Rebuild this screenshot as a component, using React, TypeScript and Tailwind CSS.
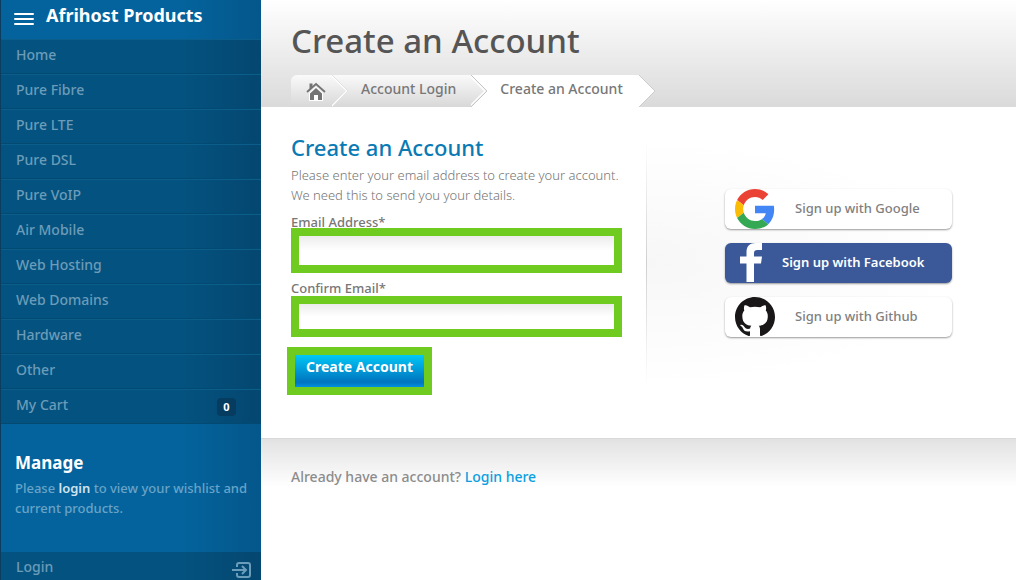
import type { ReactNode } from "react";

const products = [
  "Home",
  "Pure Fibre",
  "Pure LTE",
  "Pure DSL",
  "Pure VoIP",
  "Air Mobile",
  "Web Hosting",
  "Web Domains",
  "Hardware",
  "Other",
];

function NavRow({ children }: { children: ReactNode }) {
  return (
    <li className="h-[35px] border-t border-[#0b5d8a] shadow-[inset_0_-1px_0_#034a72]">
      {children}
    </li>
  );
}

function LoginIcon() {
  return (
    <svg width="20" height="16" viewBox="0 0 20 16" fill="none" stroke="currentColor" strokeWidth="2" aria-hidden="true">
      <path d="M5 5V3a2 2 0 0 1 2-2h9a2 2 0 0 1 2 2v10a2 2 0 0 1-2 2H7a2 2 0 0 1-2-2v-2" />
      <path d="M0 8h13M10 4l4 4-4 4" />
    </svg>
  );
}

function Sidebar() {
  return (
    <aside className="flex w-[261px] shrink-0 flex-col border-l border-[#0c3d5e] bg-linear-to-r from-[#04639c] from-70% to-[#04578b]">
      <header className="flex h-[39px] items-start gap-3 pl-[13px]">
        <button type="button" aria-label="Toggle menu" className="mt-[13px] flex w-5 flex-col gap-[3px]">
          <span className="h-0.5 rounded-full bg-white" />
          <span className="h-0.5 rounded-full bg-white" />
          <span className="h-0.5 rounded-full bg-white" />
        </button>
        <h2 className="pt-[3px] text-[18px] leading-6 font-bold text-white">Afrihost Products</h2>
      </header>

      <nav className="bg-linear-to-r from-[#04527f] from-70% to-[#044770] text-[14px] leading-[30px] font-medium text-[#6b9cb9]">
        <ul>
          {products.map((name) => (
            <NavRow key={name}>
              <a href="#" className="block px-[15px]">{name}</a>
            </NavRow>
          ))}
          <NavRow>
            <a href="#" className="flex items-start justify-between pr-[25px] pl-[15px]">
              My Cart
              <span className="mt-2 h-[18px] w-[19px] rounded-sm bg-[#053c60] text-center text-[11px] leading-[18px] font-bold text-white">
                0
              </span>
            </a>
          </NavRow>
        </ul>
      </nav>

      <section className="h-32 pt-[27px] pr-2 pl-[14px]">
        <h2 className="text-[17px] leading-6 font-bold text-white">Manage</h2>
        <p className="pt-[3px] text-[13px] leading-5 font-medium text-[#68a3c8]">
          Please <a href="#" className="font-semibold text-[#cfe3f0]">login</a> to view your wishlist and
          <br />
          current products.
        </p>
      </section>

      <a
        href="#"
        className="flex flex-1 items-start justify-between bg-linear-to-r from-[#04527f] from-70% to-[#044770] pr-[9px] pl-[15px] text-[14px] leading-[30px] font-medium text-[#6b9cb9]"
      >
        Login
        <span className="pt-[10px]"><LoginIcon /></span>
      </a>
    </aside>
  );
}

function Chevron() {
  return (
    <svg width="17" height="32" viewBox="0 0 17 32" fill="none" aria-hidden="true">
      <path d="M0 0L16 16L0 32" stroke="#c6c6c6" />
      <path d="M-1 0L15 16L-1 32" stroke="#fff" strokeWidth="1.4" />
    </svg>
  );
}

function Breadcrumbs() {
  return (
    <nav aria-label="Breadcrumb" className="text-[14px] leading-7 font-medium text-[#777]">
      <ol className="flex h-8">
        <li className="flex rounded-tl-md bg-linear-to-b from-[#fafafa] to-[#d8d8d8]">
          <a href="#" aria-label="Home" className="flex w-[41px] justify-end pt-[7px] pr-[6px]">
            <svg width="20" height="19" viewBox="0 0 20 19" aria-hidden="true">
              <path d="M3 11L10 5L17 11V19H3Z" fill="#fff" />
              <path d="M4 11.500L10 6L16 11.500V18H12V13H8V18H4Z" fill="#747474" />
              <path d="M1 10L10 2L19 10" fill="none" stroke="#747474" strokeWidth="1.800" />
              <path d="M3.500 1.500H6.500V4.500L3.500 7Z" fill="#747474" />
            </svg>
          </a>
          <Chevron />
        </li>
        <li className="flex bg-linear-to-b from-[#fafafa] to-[#d8d8d8]">
          <a href="#" className="pr-[15px] pl-3">Account Login</a>
        </li>
        <li className="flex">
          <svg width="17" height="32" viewBox="0 0 17 32" aria-hidden="true">
            <defs>
              <linearGradient id="crumb" x1="0" y1="0" x2="0" y2="1">
                <stop offset="0" stopColor="#fafafa" />
                <stop offset="1" stopColor="#d8d8d8" />
              </linearGradient>
            </defs>
            <rect width="17" height="32" fill="#fff" />
            <path d="M0 0L16 16L0 32Z" fill="url(#crumb)" />
            <path d="M0 0L16 16L0 32" fill="none" stroke="#c6c6c6" />
            <path d="M-2 0L14 16L-2 32" fill="none" stroke="#fff" strokeWidth="1.4" />
          </svg>
          <span aria-current="page" className="bg-white pr-4 pl-3">Create an Account</span>
          <svg width="17" height="32" viewBox="0 0 17 32" aria-hidden="true">
            <path d="M0 0L16 16L0 32Z" fill="#fff" />
            <path d="M0 0L16 16L0 32" fill="none" stroke="#ccc" />
          </svg>
        </li>
      </ol>
    </nav>
  );
}

function SignUpForm() {
  return (
    <form className="w-[355px] shrink-0 pt-[26px]">
      <h2 className="text-[22px] leading-7 font-medium text-[#0a7ab5]">Create an Account</h2>
      <p className="pt-1 text-[13px] leading-5 font-light text-[#757575]">
        Please enter your email address to create your account.
        <br />
        We need this to send you your details.
      </p>
      <div className="flex flex-col pt-[11px]">
        <label htmlFor="email" className="h-3 text-[13px] leading-3 font-medium text-[#777]">Email Address*</label>
        <input
          id="email"
          type="email"
          className="h-[45px] w-[331px] border-8 border-[#6fcb1f] bg-linear-to-b from-[#ececec] to-white to-50% px-2 text-sm outline-none"
        />
      </div>
      <div className="flex flex-col pt-[9px]">
        <label htmlFor="confirm" className="h-[14px] text-[13px] leading-3 font-medium text-[#777]">Confirm Email*</label>
        <input
          id="confirm"
          type="email"
          className="h-[41px] w-[331px] border-8 border-[#6fcb1f] bg-linear-to-b from-[#ececec] to-white to-50% px-2 text-sm outline-none"
        />
      </div>
      <button
        type="submit"
        className="mt-[10px] -ml-1 h-12 w-[145px] border-8 border-[#6fcb1f] bg-linear-to-b from-[#00c8f5] via-[#0074c0] via-85% to-[#0090e0] pb-2 text-[14px] leading-6 font-bold text-white"
      >
        Create Account
      </button>
    </form>
  );
}

function GoogleLogo() {
  return (
    <svg width="40" height="40" viewBox="0 0 48 48" aria-hidden="true">
      <path fill="#EA4335" d="M24 9.500c3.540 0 6.710 1.220 9.210 3.600l6.850-6.850C35.900 2.380 30.470 0 24 0 14.620 0 6.510 5.380 2.560 13.220l7.980 6.190C12.430 13.720 17.740 9.500 24 9.500z" />
      <path fill="#4285F4" d="M46.980 24.550c0-1.570-.15-3.090-.38-4.550H24v9.020h12.940c-.58 2.960-2.260 5.480-4.780 7.180l7.730 6c4.510-4.180 7.090-10.360 7.090-17.650z" />
      <path fill="#FBBC05" d="M10.530 28.590c-.48-1.450-.76-2.990-.76-4.590s.27-3.140.76-4.590l-7.980-6.190C.92 16.460 0 20.120 0 24c0 3.880.92 7.540 2.560 10.780l7.970-6.190z" />
      <path fill="#34A853" d="M24 48c6.480 0 11.930-2.130 15.890-5.810l-7.730-6c-2.150 1.450-4.920 2.300-8.160 2.300-6.260 0-11.570-4.220-13.470-9.910l-7.980 6.190C6.510 42.620 14.620 48 24 48z" />
    </svg>
  );
}

function FacebookLogo() {
  return (
    <svg width="40" height="40" viewBox="0 0 40 40" fill="#fff" aria-hidden="true">
      <path d="M11.500 39V20.500H5V13.500H11.500V9C11.500 3 15 0 20.500 0H27V7H22.500C20 7 19 8 19 10V13.500H27L26 20.500H19V39Z" />
    </svg>
  );
}

function GithubLogo() {
  return (
    <svg width="40" height="40" viewBox="0 0 16 16" fill="#191717" aria-hidden="true">
      <path d="M8 0C3.580 0 0 3.580 0 8c0 3.540 2.290 6.530 5.470 7.590.4.070.55-.17.55-.38 0-.19-.01-.82-.01-1.490-2.010.37-2.530-.49-2.690-.94-.09-.23-.48-.94-.82-1.130-.28-.15-.68-.52-.01-.53.63-.01 1.080.58 1.230.82.72 1.210 1.870.87 2.330.66.07-.52.28-.87.51-1.070-1.780-.2-3.640-.89-3.640-3.950 0-.87.31-1.590.82-2.150-.08-.2-.36-1.020.08-2.120 0 0 .67-.21 2.200.82.64-.18 1.320-.27 2-.27s1.360.09 2 .27c1.530-1.040 2.200-.82 2.200-.82.44 1.100.16 1.920.08 2.120.51.56.82 1.270.82 2.150 0 3.070-1.870 3.750-3.650 3.950.29.25.54.73.54 1.480 0 1.070-.01 1.930-.01 2.200 0 .21.15.46.55.38A8.010 8.010 0 0 0 16 8c0-4.420-3.580-8-8-8z" />
    </svg>
  );
}

function SocialButtons() {
  return (
    <section className="mt-[33px] flex h-[246px] flex-1">
      <div className="w-px bg-linear-to-b from-transparent via-[#d0d0d0] to-transparent" />
      <div className="flex flex-1 flex-col gap-[14px] bg-radial-[ellipse_85%_50%_at_0%_50%] from-[#f7f7f7] to-white pt-[49px] pl-[78px] text-[13px] font-medium text-[#808080]">
        <button type="button" className="flex h-10 w-[227px] items-center rounded-md bg-white pl-[10px] shadow-[0_1px_2px_#999]">
          <GoogleLogo />
          <span className="pl-5">Sign up with Google</span>
        </button>
        <button type="button" className="flex h-10 w-[227px] items-center rounded-md bg-[#3b5998] pl-[10px] font-semibold text-white shadow-[0_1px_2px_#999]">
          <FacebookLogo />
          <span className="pl-[7px]">Sign up with Facebook</span>
        </button>
        <button type="button" className="flex h-10 w-[227px] items-center rounded-md bg-white pl-[10px] shadow-[0_1px_2px_#999]">
          <GithubLogo />
          <span className="pl-5">Sign up with Github</span>
        </button>
      </div>
    </section>
  );
}

export default function App() {
  return (
    <div className="flex min-h-screen bg-white font-['Noto_Sans',sans-serif]">
      <Sidebar />
      <main className="flex-1">
        <header className="bg-linear-to-b from-white to-[#dadada] pt-[19px] pl-[30px]">
          <h1 className="pb-3 text-[33px] leading-[44px] font-medium text-[#555]">Create an Account</h1>
          <Breadcrumbs />
        </header>
        <div className="flex min-h-[331px] pl-[30px]">
          <SignUpForm />
          <SocialButtons />
        </div>
        <footer className="border-t border-[#d8d8d8] bg-linear-to-b from-[#e2e2e2] to-white pt-7 pl-[30px] text-[14px] leading-5 font-medium text-[#8c8c8c]">
          Already have an account? <a href="#" className="text-[#0a9fe0]">Login here</a>
        </footer>
      </main>
    </div>
  );
}
